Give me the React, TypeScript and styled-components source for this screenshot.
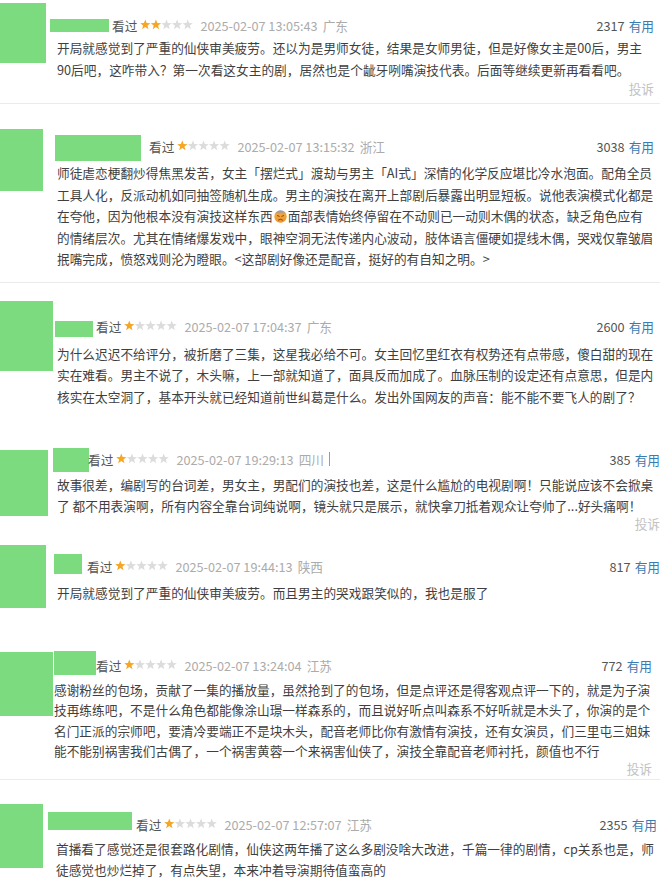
import React from "react";
import styled, { createGlobalStyle } from "styled-components";

const GlobalStyle = createGlobalStyle`
  html, body {
    margin: 0;
    padding: 0;
    background: #fff;
  }
  body {
    font-family: "Noto Sans CJK SC", "Noto Sans", sans-serif;
    overflow: hidden;
  }
`;

const MASK = "#7bdb7e";
const FONT_SIZE = "12.7px";

type Review = {
  height: number;
  divider: boolean;
  avatar: { w: number; h: number; top: number };
  headerTop: number;
  name: { x: number; w: number; h: number; top: number; gap: number };
  textX: number;
  textGap: number;
  lineHeight: number;
  right: number;
  stars: number;
  time: string;
  place: string;
  votes: number;
  lines: React.ReactNode[];
  report: boolean;
  caret?: boolean;
};

const Page = styled.main`
  width: 660px;
  display: flex;
  flex-direction: column;
`;

const Card = styled.article<{ $h: number; $divider: boolean; $right: number }>`
  display: flex;
  align-items: flex-start;
  box-sizing: border-box;
  height: ${(p) => p.$h}px;
  padding-right: ${(p) => 660 - p.$right}px;
  border-bottom: 1px solid ${(p) => (p.$divider ? "#ebebeb" : "transparent")};
  overflow: hidden;
`;

const Avatar = styled.div<{ $w: number; $h: number; $top: number }>`
  flex: none;
  width: ${(p) => p.$w}px;
  height: ${(p) => p.$h}px;
  margin-top: ${(p) => p.$top}px;
  background: ${MASK};
`;

const Body = styled.div<{ $top: number; $indent: number }>`
  flex: 1;
  min-width: 0;
  display: flex;
  flex-direction: column;
  margin-top: ${(p) => p.$top}px;
  padding-left: ${(p) => p.$indent}px;
`;

const Header = styled.div<{ $shift: number }>`
  display: flex;
  align-items: center;
  height: 22px;
  margin-left: ${(p) => p.$shift}px;
  font-size: ${FONT_SIZE};
  white-space: nowrap;
`;

const NameMask = styled.span<{ $w: number; $h: number; $top: number; $gap: number }>`
  flex: none;
  align-self: flex-start;
  width: ${(p) => p.$w}px;
  height: ${(p) => p.$h}px;
  margin-top: ${(p) => p.$top}px;
  margin-right: ${(p) => p.$gap}px;
  background: ${MASK};
`;

const Seen = styled.span`
  color: #555;
`;

const StarRow = styled.svg`
  flex: none;
  margin-left: 3px;
  margin-top: -1px;
`;

const Stamp = styled.span`
  margin-left: 7px;
  color: #ababab;
`;

const Place = styled.span`
  margin-left: 5px;
  color: #ababab;
`;

const Caret = styled.span`
  width: 1px;
  height: 14px;
  margin-left: 5px;
  background: #9a9a9a;
`;

const Spacer = styled.span`
  flex: 1;
`;

const Votes = styled.span`
  color: #555;
`;

const Useful = styled.span`
  margin-left: 4px;
  color: #3b7cb0;
`;

const Content = styled.div<{ $gap: number; $lh: number }>`
  margin-top: ${(p) => p.$gap}px;
  font-size: ${FONT_SIZE};
  line-height: ${(p) => p.$lh}px;
  color: #3f3f3f;
`;

const Line = styled.div`
  white-space: nowrap;
`;

const Report = styled.div`
  align-self: flex-end;
  font-size: ${FONT_SIZE};
  line-height: 16px;
  color: #c2c2c2;
`;

const Emoji = styled.svg`
  display: inline-block;
  vertical-align: -2px;
  margin: 0 1px;
`;

function starPoints(cx: number, cy: number, outer: number, inner: number) {
  const pts: string[] = [];
  for (let i = 0; i < 10; i++) {
    const r = i % 2 === 0 ? outer : inner;
    const a = (Math.PI / 180) * (-90 + i * 36);
    pts.push(`${(cx + r * Math.cos(a)).toFixed(2)},${(cy + r * Math.sin(a)).toFixed(2)}`);
  }
  return pts.join(" ");
}

function Stars({ value }: { value: number }) {
  return (
    <StarRow width="53" height="11" viewBox="0 0 53 11">
      {[0, 1, 2, 3, 4].map((i) => (
        <polygon
          key={i}
          points={starPoints(5.3 + i * 10.6, 5.8, 5.4, 2.3)}
          fill={i < value ? "#f5a623" : "#dcdcdc"}
        />
      ))}
    </StarRow>
  );
}

function Frown() {
  return (
    <Emoji width="13" height="13" viewBox="0 0 13 13">
      <defs>
        <linearGradient id="faceShade" x1="0" y1="0" x2="0" y2="1">
          <stop offset="0" stopColor="#8a96b8" />
          <stop offset="0.35" stopColor="#f3a53c" />
          <stop offset="1" stopColor="#f0952a" />
        </linearGradient>
      </defs>
      <circle cx="6.5" cy="6.5" r="6.2" fill="url(#faceShade)" />
      <path d="M3.4 5.6 L5.2 6.3 M9.6 5.6 L7.8 6.3" stroke="#7a3d10" strokeWidth="0.9" strokeLinecap="round" />
      <path d="M4.4 10 Q6.5 8.2 8.6 10" stroke="#7a3d10" strokeWidth="0.9" fill="none" strokeLinecap="round" />
    </Emoji>
  );
}

const reviews: Review[] = [
  {
    height: 104,
    divider: true,
    avatar: { w: 46, h: 60, top: 3 },
    headerTop: 14,
    name: { x: 50, w: 59, h: 13, top: 5, gap: 3 },
    textX: 57,
    textGap: 1,
    lineHeight: 22,
    right: 654,
    stars: 2,
    time: "2025-02-07 13:05:43",
    place: "广东",
    votes: 2317,
    report: true,
    lines: [
      "开局就感觉到了严重的仙侠审美疲劳。还以为是男师女徒，结果是女师男徒，但是好像女主是00后，男主",
      "90后吧，这咋带入？第一次看这女主的剧，居然也是个龇牙咧嘴演技代表。后面等继续更新再看看吧。",
    ],
  },
  {
    height: 179,
    divider: true,
    avatar: { w: 43, h: 62, top: 25 },
    headerTop: 31,
    name: { x: 55, w: 86, h: 26, top: 0, gap: 8 },
    textX: 57,
    textGap: 5,
    lineHeight: 21.5,
    right: 654,
    stars: 1,
    time: "2025-02-07 13:15:32",
    place: "浙江",
    votes: 3038,
    report: false,
    lines: [
      "师徒虐恋梗翻炒得焦黑发苦，女主「摆烂式」渡劫与男主「AI式」深情的化学反应堪比冷水泡面。配角全员",
      "工具人化，反派动机如同抽签随机生成。男主的演技在离开上部剧后暴露出明显短板。说他表演模式化都是",
      <>
        在夸他，因为他根本没有演技这样东西
        <Frown />
        面部表情始终停留在不动则已一动则木偶的状态，缺乏角色应有
      </>,
      "的情绪层次。尤其在情绪爆发戏中，眼神空洞无法传递内心波动，肢体语言僵硬如提线木偶，哭戏仅靠皱眉",
      "抿嘴完成，愤怒戏则沦为瞪眼。<这部剧好像还是配音，挺好的有自知之明。>",
    ],
  },
  {
    height: 158,
    divider: false,
    avatar: { w: 53, h: 70, top: 18 },
    headerTop: 32,
    name: { x: 55, w: 38, h: 16, top: 6, gap: 3 },
    textX: 57,
    textGap: 6,
    lineHeight: 21.3,
    right: 654,
    stars: 1,
    time: "2025-02-07 17:04:37",
    place: "广东",
    votes: 2600,
    report: false,
    lines: [
      "为什么迟迟不给评分，被折磨了三集，这星我必给不可。女主回忆里红衣有权势还有点带感，傻白甜的现在",
      "实在难看。男主不说了，木头嘛，上一部就知道了，面具反而加成了。血脉压制的设定还有点意思，但是内",
      "核实在太空洞了，基本开头就已经知道前世纠葛是什么。发出外国网友的声音：能不能不要飞人的剧了？",
    ],
  },
  {
    height: 97,
    divider: false,
    avatar: { w: 48, h: 66, top: 9 },
    headerTop: 7,
    name: { x: 53, w: 36, h: 24, top: 0, gap: -1 },
    textX: 57,
    textGap: 3.5,
    lineHeight: 21,
    right: 660,
    stars: 1,
    time: "2025-02-07 19:29:13",
    place: "四川",
    caret: true,
    votes: 385,
    report: true,
    lines: [
      "故事很差，编剧写的台词差，男女主，男配们的演技也差，这是什么尴尬的电视剧啊！只能说应该不会掀桌",
      "了 都不用表演啊，所有内容全靠台词纯说啊，镜头就只是展示，就快拿刀抵着观众让夸帅了...好头痛啊！",
    ],
  },
  {
    height: 103,
    divider: false,
    avatar: { w: 46, h: 63, top: 7 },
    headerTop: 17,
    name: { x: 54, w: 28, h: 20, top: -1, gap: 5 },
    textX: 57,
    textGap: 5,
    lineHeight: 21,
    right: 660,
    stars: 1,
    time: "2025-02-07 19:44:13",
    place: "陕西",
    votes: 817,
    report: false,
    lines: ["开局就感觉到了严重的仙侠审美疲劳。而且男主的哭戏跟笑似的，我也是服了"],
  },
  {
    height: 139,
    divider: true,
    avatar: { w: 53, h: 64, top: 11 },
    headerTop: 13,
    name: { x: 54, w: 42, h: 24, top: -3, gap: 0 },
    textX: 54,
    textGap: 4,
    lineHeight: 20.3,
    right: 652,
    stars: 1,
    time: "2025-02-07 13:24:04",
    place: "江苏",
    votes: 772,
    report: true,
    lines: [
      "感谢粉丝的包场，贡献了一集的播放量，虽然抢到了的包场，但是点评还是得客观点评一下的，就是为子演",
      "技再练练吧，不是什么角色都能像涂山璟一样森系的，而且说好听点叫森系不好听就是木头了，你演的是个",
      "名门正派的宗师吧，要清冷要端正不是块木头，配音老师比你有激情有演技，还有女演员，们三里屯三姐妹",
      "能不能别祸害我们古偶了，一个祸害黄蓉一个来祸害仙侠了，演技全靠配音老师衬托，颜值也不行",
    ],
  },
  {
    height: 113,
    divider: false,
    avatar: { w: 43, h: 64, top: 24 },
    headerTop: 33,
    name: { x: 48, w: 84, h: 18, top: -1, gap: 4 },
    textX: 56,
    textGap: 4,
    lineHeight: 20.5,
    right: 657,
    stars: 1,
    time: "2025-02-07 12:57:07",
    place: "江苏",
    votes: 2355,
    report: false,
    lines: [
      "首播看了感觉还是很套路化剧情，仙侠这两年播了这么多剧没啥大改进，千篇一律的剧情，cp关系也是，师",
      "徒感觉也炒烂掉了，有点失望，本来冲着导演期待值蛮高的",
    ],
  },
];

function ReviewCard({ r }: { r: Review }) {
  return (
    <Card $h={r.height} $divider={r.divider} $right={r.right}>
      <Avatar $w={r.avatar.w} $h={r.avatar.h} $top={r.avatar.top} />
      <Body $top={r.headerTop} $indent={r.textX - r.avatar.w}>
        <Header $shift={r.name.x - r.textX}>
          <NameMask $w={r.name.w} $h={r.name.h} $top={r.name.top} $gap={r.name.gap} />
          <Seen>看过</Seen>
          <Stars value={r.stars} />
          <Stamp>{r.time}</Stamp>
          <Place>{r.place}</Place>
          {r.caret && <Caret />}
          <Spacer />
          <Votes>{r.votes}</Votes>
          <Useful>有用</Useful>
        </Header>
        <Content $gap={r.textGap} $lh={r.lineHeight}>
          {r.lines.map((l, i) => (
            <Line key={i}>{l}</Line>
          ))}
        </Content>
        {r.report && <Report>投诉</Report>}
      </Body>
    </Card>
  );
}

export default function App() {
  return (
    <>
      <GlobalStyle />
      <Page>
        {reviews.map((r, i) => (
          <ReviewCard key={i} r={r} />
        ))}
      </Page>
    </>
  );
}
